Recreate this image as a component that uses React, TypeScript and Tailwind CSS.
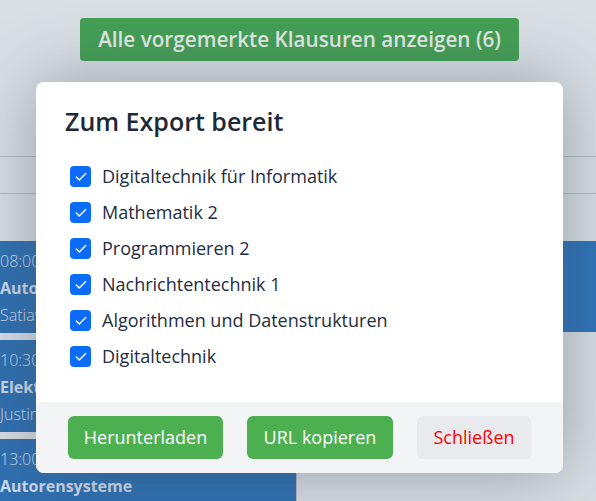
import { Check } from "lucide-react";

const exams = [
  "Digitaltechnik für Informatik",
  "Mathematik 2",
  "Programmieren 2",
  "Nachrichtentechnik 1",
  "Algorithmen und Datenstrukturen",
  "Digitaltechnik",
];

const events = [
  { time: "08:00 - 10:00", title: "Autorensysteme", who: "Satiawan, Anton" },
  { time: "10:30 - 12:00", title: "Elektrotechnik 2", who: "Justin, Marie" },
  { time: "13:00 - 14:30", title: "Autorensysteme", who: "Satiawan, Anton" },
];

export default function App() {
  return (
    <div
      className="relative h-[501px] w-[596px] overflow-hidden bg-[#dadfe4]"
      style={{ fontFamily: '"Open Sans", "Noto Sans", sans-serif' }}
    >
      {/* page behind the dialog */}
      <div className="flex flex-col">
        <div className="flex justify-center pt-[18px] pl-[3px]">
          <button className="h-[43px] w-[439px] rounded text-[20.7px] font-semibold text-[#e3e9e4] bg-[#449f54]">
            Alle vorgemerkte Klausuren anzeigen (6)
          </button>
        </div>
        <div className="mt-[95px] h-[38px] border-y border-[#b4bbc4]" />
        <div className="mt-[47px] grid grid-cols-[297px_1fr]">
          <div className="flex flex-col gap-[7px] border-r border-[#b4bbc4]">
            {events.map((e, i) => (
              <div key={i} className="h-[92px] bg-[#2f70b1] pt-[9px] text-[#cfdbea]">
                <div className="text-[16px] leading-[22px] font-light">{e.time}</div>
                <div className="mt-[5px] text-[16px] leading-[22px] font-bold">{e.title}</div>
                <div className="mt-[5px] text-[16px] leading-[22px] font-light">{e.who}</div>
              </div>
            ))}
          </div>
          <div className="pl-[3px]">
            <div className="h-[91px] bg-[#2f73b8]" />
          </div>
        </div>
      </div>

      {/* dialog */}
      <div className="absolute inset-0 flex pl-[36px] pt-[82px]">
        <div className="h-[391px] w-[527px] overflow-hidden rounded-lg bg-white shadow-[0_0_70px_rgba(60,75,95,0.45)] flex flex-col">
          <div className="flex-1 px-[34px] pt-[23px]">
            <h2 className="-ml-[5px] text-[25px] leading-[32px] font-semibold text-[#1e2937]">
              Zum Export bereit
            </h2>
            <ul className="mt-[29px] flex flex-col gap-[15px]">
              {exams.map((name) => (
                <li key={name} className="flex h-[21px] items-center gap-[11px]">
                  <span className="flex h-[21px] w-[21px] items-center justify-center rounded-[4px] bg-[#0b6cf7]">
                    <Check size={14} strokeWidth={2.5} className="text-white" />
                  </span>
                  <span className="text-[18px] text-[#222d3f]">{name}</span>
                </li>
              ))}
            </ul>
          </div>
          <div className="flex h-[71px] items-center gap-[24px] bg-[#f3f4f6] px-[32px]">
            <button className="h-[43px] w-[155px] rounded-md bg-[#4caf50] text-[18px] text-white">
              Herunterladen
            </button>
            <button className="h-[43px] w-[146px] rounded-md bg-[#4caf50] text-[18px] text-white">
              URL kopieren
            </button>
            <button className="h-[43px] w-[114px] rounded-md bg-[#e8eaed] text-[18px] text-[#ff0000]">
              Schließen
            </button>
          </div>
        </div>
      </div>
    </div>
  );
}
